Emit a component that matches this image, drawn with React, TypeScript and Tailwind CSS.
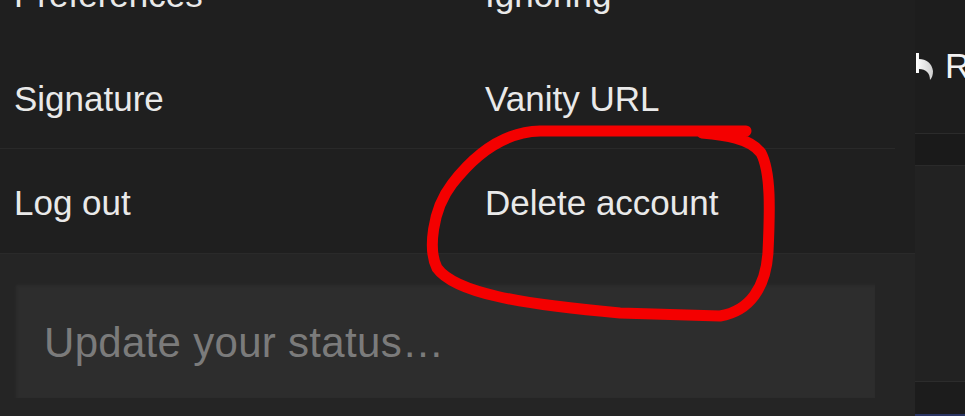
import React from "react";

const rows: [string, string][] = [
  ["Preferences", "Ignoring"],
  ["Signature", "Vanity URL"],
];

const MenuRow = ({ left, right, h }: { left: string; right: string; h: string }) => (
  <div className={`grid grid-cols-[471px_1fr] items-center pl-[14px] ${h}`}>
    <span className="leading-none">{left}</span>
    <span className="leading-none">{right}</span>
  </div>
);

const App = () => {
  return (
    <main
      className="relative flex w-[965px] h-[416px] overflow-hidden bg-[#1c1c1c] text-[#e9e9e9]"
      style={{ fontFamily: '"Liberation Sans", Arial, sans-serif' }}
    >
      {/* account menu panel */}
      <section className="relative z-10 flex flex-col w-[915px] shrink-0 bg-[#1f1f1f] text-[35px] tracking-[0px]">
        <div className="-mt-[56px]">
          <MenuRow left={rows[0][0]} right={rows[0][1]} h="h-[101px]" />
          <MenuRow left={rows[1][0]} right={rows[1][1]} h="h-[103px] pt-[3px]" />
        </div>
        <div className="h-[1px] w-[895px] bg-[#292929]" />
        <MenuRow left="Log out" right="Delete account" h="h-[104px] pt-[2px]" />
        <div className="h-[1px] bg-[#2a2a2a]" />
        <div className="flex-1 bg-[#252525] pt-[29px] pl-[14px]">
          <div className="flex items-center w-[861px] h-[115px] bg-[#2d2d2d] pl-[30px] pt-[4px] shadow-[inset_2px_2px_3px_rgba(0,0,0,0.18)]">
            <span className="text-[42px] leading-none text-[#7b7b7b] tracking-[0.3px]">
              Update your status…
            </span>
          </div>
        </div>
      </section>

      {/* sidebar peeking from behind */}
      <aside className="flex flex-col flex-1 bg-[#1d1d1d]">
        <div className="flex items-center h-[133px] pb-[2px]">
          <div className="flex items-center gap-[10px] -ml-[2px]">
            <svg width="22" height="30" viewBox="0 0 22 30" className="shrink-0">
              <defs>
                <linearGradient id="rg" x1="0" x2="1" y1="0" y2="0">
                  <stop offset="0" stopColor="#ffffff" />
                  <stop offset="1" stopColor="#cfcfcf" />
                </linearGradient>
              </defs>
              <path
                d="M3 2 L6 2 L6 8 C13 8 19 12 20 20 C20 24 19 27 17 29 C17 22 13 18 6 18 L6 22 L3 22 Z"
                fill="url(#rg)"
              />
            </svg>
            <span className="text-[35px] leading-none text-[#f2f2f2]">R</span>
          </div>
        </div>
        <div className="h-[1px] bg-[#2b2b2b]" />
        <div className="h-[31px] bg-[#1a1a1a]" />
        <div className="h-[1px] bg-[#2a2a2a]" />
        <div className="flex-1 bg-[#222222]" />
        <div className="h-[1px] bg-[#2c2c2c]" />
        <div className="h-[32px] bg-[#1c1c1c]" />
        <div className="h-[2px] bg-[#2a3563]" />
      </aside>

      {/* hand-drawn red annotation */}
      <svg
        className="absolute inset-0 z-20 pointer-events-none"
        width="965"
        height="416"
        viewBox="0 0 965 416"
      >
        <path
          d="M746 131 L540 131 C500 132 472 158 452 184 C432 210 428 250 437 268 C455 293 520 304 620 313 L720 316 C750 311 766 287 768 252 C770 210 771 172 761 153 C750 138 724 135 702 133"
          fill="none"
          stroke="#f40000"
          strokeWidth="11"
          strokeLinecap="round"
          strokeLinejoin="round"
        />
      </svg>
    </main>
  );
};

export default App;
